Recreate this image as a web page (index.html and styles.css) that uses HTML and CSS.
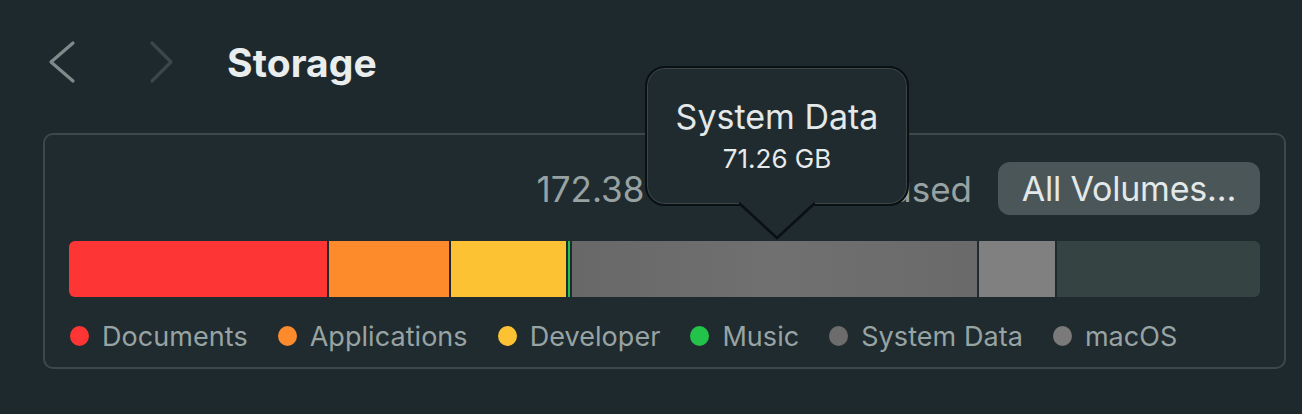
FILE: index.html
```html
<!DOCTYPE html>
<html lang="en">
<head>
<meta charset="utf-8">
<title>Storage</title>
<link rel="stylesheet" href="styles.css">
</head>
<body>
<header class="toolbar">
  <button class="nav back" aria-label="Back">
    <svg width="32" height="44" viewBox="0 0 32 44"><path d="M27 3 L5 22 L27 41" fill="none" stroke="currentColor" stroke-width="3.2" stroke-linecap="round" stroke-linejoin="round"/></svg>
  </button>
  <button class="nav forward" aria-label="Forward">
    <svg width="28" height="44" viewBox="0 0 28 44"><path d="M4 3 L23 22 L4 41" fill="none" stroke="currentColor" stroke-width="3.2" stroke-linecap="round" stroke-linejoin="round"/></svg>
  </button>
  <h1 class="title">Storage</h1>
</header>

<section class="panel">
  <div class="summary">
    <span class="used">172.38 GB of 500 GB used</span>
    <button class="volumes">All Volumes…</button>
  </div>
  <div class="bar">
    <div class="seg docs" style="width:258px"></div>
    <div class="seg apps" style="width:120px"></div>
    <div class="seg dev" style="width:115px"></div>
    <div class="seg music" style="width:2px"></div>
    <div class="seg sys" style="width:405px"></div>
    <div class="seg mac" style="width:76px"></div>
    <div class="seg free"></div>
  </div>
  <ul class="legend">
    <li><span class="dot docs"></span>Documents</li>
    <li><span class="dot apps"></span>Applications</li>
    <li><span class="dot dev"></span>Developer</li>
    <li><span class="dot music"></span>Music</li>
    <li><span class="dot sys"></span>System Data</li>
    <li><span class="dot mac"></span>macOS</li>
  </ul>
  <div class="tooltip">
    <div class="tip-title">System Data</div>
    <div class="tip-value">71.26 GB</div>
    <svg class="tip-arrow" width="76" height="38" viewBox="0 0 76 38"><path d="M0 1 L38 36 L76 1" fill="#1f2b2f" stroke="#0b1012" stroke-width="2.5"/></svg>
  </div>
</section>
</body>
</html>
```

FILE: styles.css
```css
* { box-sizing: border-box; }
html, body { margin: 0; padding: 0; }
body {
  background: #1e292d;
  font-family: Inter, "Liberation Sans", Arial, sans-serif;
  color: #e6eaea;
  width: 1302px;
  height: 414px;
  overflow: hidden;
}
.toolbar {
  display: flex;
  align-items: center;
  height: 62px;
  margin-top: 31px;
  padding-left: 46px;
}
.nav {
  background: none;
  border: 0;
  padding: 0;
  display: flex;
  align-items: center;
}
.back { color: #7f8b8b; }
.forward { color: #3b4748; margin-left: 70px; }
.title {
  margin: 0 0 0 51px;
  font-size: 39px;
  font-weight: 700;
  letter-spacing: 0.1px;
  color: #e9eded;
}
.panel {
  position: relative;
  margin: 40px 0 0 43px;
  width: 1243px;
  height: 236px;
  border: 2px solid #3c484a;
  border-radius: 10px;
  background: #1f2b2f;
  padding: 27px 24px 0 24px;
}
.summary {
  display: flex;
  justify-content: flex-end;
  align-items: center;
  gap: 26px;
  height: 53px;
}
.used {
  font-size: 35px;
  letter-spacing: 0;
  color: #98a2a2;
}
.volumes {
  height: 53px;
  width: 262px;
  padding: 0;
  border: 0;
  border-radius: 12px;
  background: #4a5657;
  color: #e3e8e8;
  font-family: inherit;
  font-size: 34px;
  letter-spacing: -0.2px;
}
.bar {
  display: flex;
  gap: 2px;
  margin-top: 26px;
  height: 56px;
  border-radius: 6px;
  overflow: hidden;
}
.seg { height: 100%; flex: none; }
.seg.free { flex: 1; background: #354443; }
.docs { background: #fd3535; }
.apps { background: #fd8a2b; }
.dev { background: #fdc234; }
.music { background: #22c24b; }
.sys { background: #6b6b6b; }
.mac { background: #808080; }
.bar .sys { background: linear-gradient(90deg, #686868, #707070 50%, #6a6a6a); }
.legend {
  list-style: none;
  margin: 24px 0 0 1px;
  padding: 0;
  display: flex;
  gap: 30px;
  height: 30px;
  align-items: center;
}
.legend li {
  display: flex;
  align-items: center;
  gap: 13px;
  font-size: 27px;
  letter-spacing: 0.05px;
  color: #98a3a3;
}
.dot {
  width: 19px;
  height: 20px;
  border-radius: 50%;
  flex: none;
}
.dot.sys { background: #6c6c6c; }
.dot.mac { background: #7a7a7a; }
.tooltip {
  position: absolute;
  left: 600px;
  top: -69px;
  width: 264px;
  height: 140px;
  background: #1f2b2f;
  border: 2.5px solid #0b1012;
  border-radius: 20px;
  box-shadow: inset 0 0 0 1px #3a4648;
  display: flex;
  flex-direction: column;
  align-items: center;
  padding-top: 30px;
}
.tip-title {
  font-size: 34px;
  color: #e3e8e8;
  line-height: 38px;
}
.tip-value {
  font-size: 26px;
  color: #e6eaea;
  line-height: 30px;
  margin-top: 8px;
}
.tip-arrow {
  position: absolute;
  left: 92px;
  bottom: -36px;
}
```
